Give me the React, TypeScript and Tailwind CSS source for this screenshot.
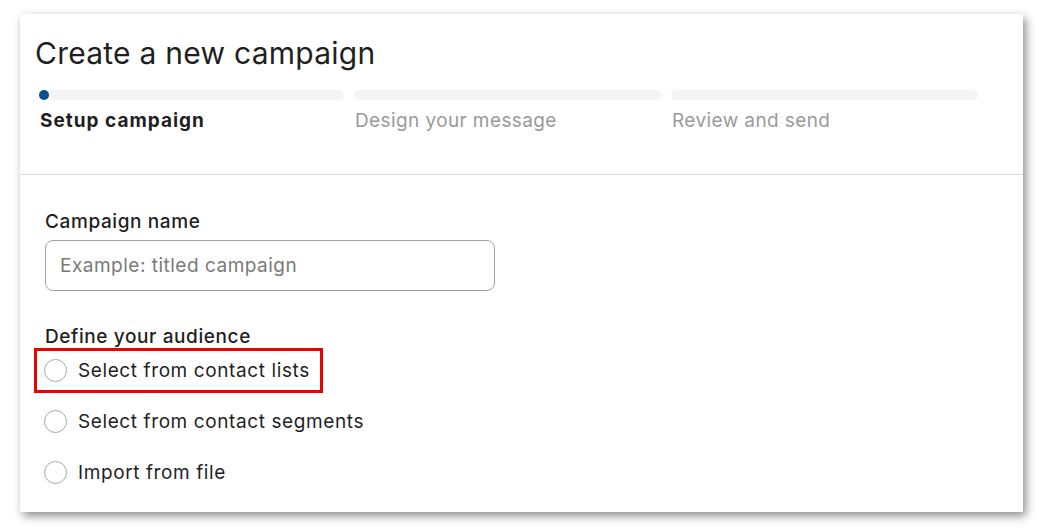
import React from "react";

const steps = [
  { label: "Setup campaign", active: true },
  { label: "Design your message", active: false },
  { label: "Review and send", active: false },
];

const audienceOptions = [
  { label: "Select from contact lists", highlighted: true },
  { label: "Select from contact segments", highlighted: false },
  { label: "Import from file", highlighted: false },
];

const App: React.FC = () => {
  return (
    <div
      className="w-[1039px] h-[532px] bg-white overflow-hidden pt-[14px] pl-[20px]"
      style={{ fontFamily: "Inter, 'Noto Sans', sans-serif" }}
    >
      <div className="w-[1003px] h-[498px] bg-white shadow-[3px_4px_9px_rgba(0,0,0,0.45)] flex flex-col">
        {/* HEADER + STEPPER */}
        <div className="h-[161px] border-b border-[#d9d9d9] pl-[15px] pt-[21px]">
          <h1 className="text-[30px] leading-[36px] text-[#1f1f1f] tracking-[0.25px]">
            Create a new campaign
          </h1>

          <div className="mt-[19px] ml-[2px] flex gap-[10px] w-[941px]">
            {steps.map((s) => (
              <div key={s.label} className="flex-1">
                <div className="h-[10px] rounded-full bg-[#f4f4f4] relative">
                  {s.active && (
                    <div className="absolute left-[2px] top-0 w-[10px] h-[10px] rounded-full bg-[#0d4f8c]" />
                  )}
                </div>
                <div
                  className={`mt-[9px] text-[19px] leading-[24px] ${
                    s.active
                      ? "pl-[3px] font-bold text-[#1f1f1f] tracking-[1px]"
                      : "pl-[1px] text-[#9a9a9a] tracking-[0.4px]"
                  }`}
                >
                  {s.label}
                </div>
              </div>
            ))}
          </div>
        </div>

        {/* FORM */}
        <div className="pl-[25px] pt-[36px]">
          <label className="block text-[19px] leading-[22px] font-medium text-[#1f1f1f] tracking-[0.6px]">
            Campaign name
          </label>
          <input
            type="text"
            placeholder="Example: titled campaign"
            className="mt-[7px] w-[450px] h-[51px] rounded-[8px] border border-[#a3a3a3] px-[14px] text-[19px] tracking-[0.5px] text-[#1f1f1f] placeholder:text-[#7a7a7a] outline-none"
          />

          <div className="mt-[35px] text-[19px] leading-[22px] font-medium text-[#1f1f1f] tracking-[0.6px]">
            Define your audience
          </div>

          <div className="mt-0 -ml-[11px] flex flex-col gap-[6px]">
            {audienceOptions.map((o) => (
              <div
                key={o.label}
                className={`w-fit h-[45px] flex items-center gap-[11px] pl-[7px] pr-[10px] border-[3px] ${
                  o.highlighted ? "border-[#ee0000]" : "border-transparent"
                }`}
              >
                <span className="w-[23px] h-[23px] rounded-full border-[1.5px] border-[#a8a8a8] bg-white" />
                <span className="text-[19px] leading-[24px] text-[#1f1f1f] tracking-[0.6px]">
                  {o.label}
                </span>
              </div>
            ))}
          </div>
        </div>
      </div>
    </div>
  );
};

export default App;
